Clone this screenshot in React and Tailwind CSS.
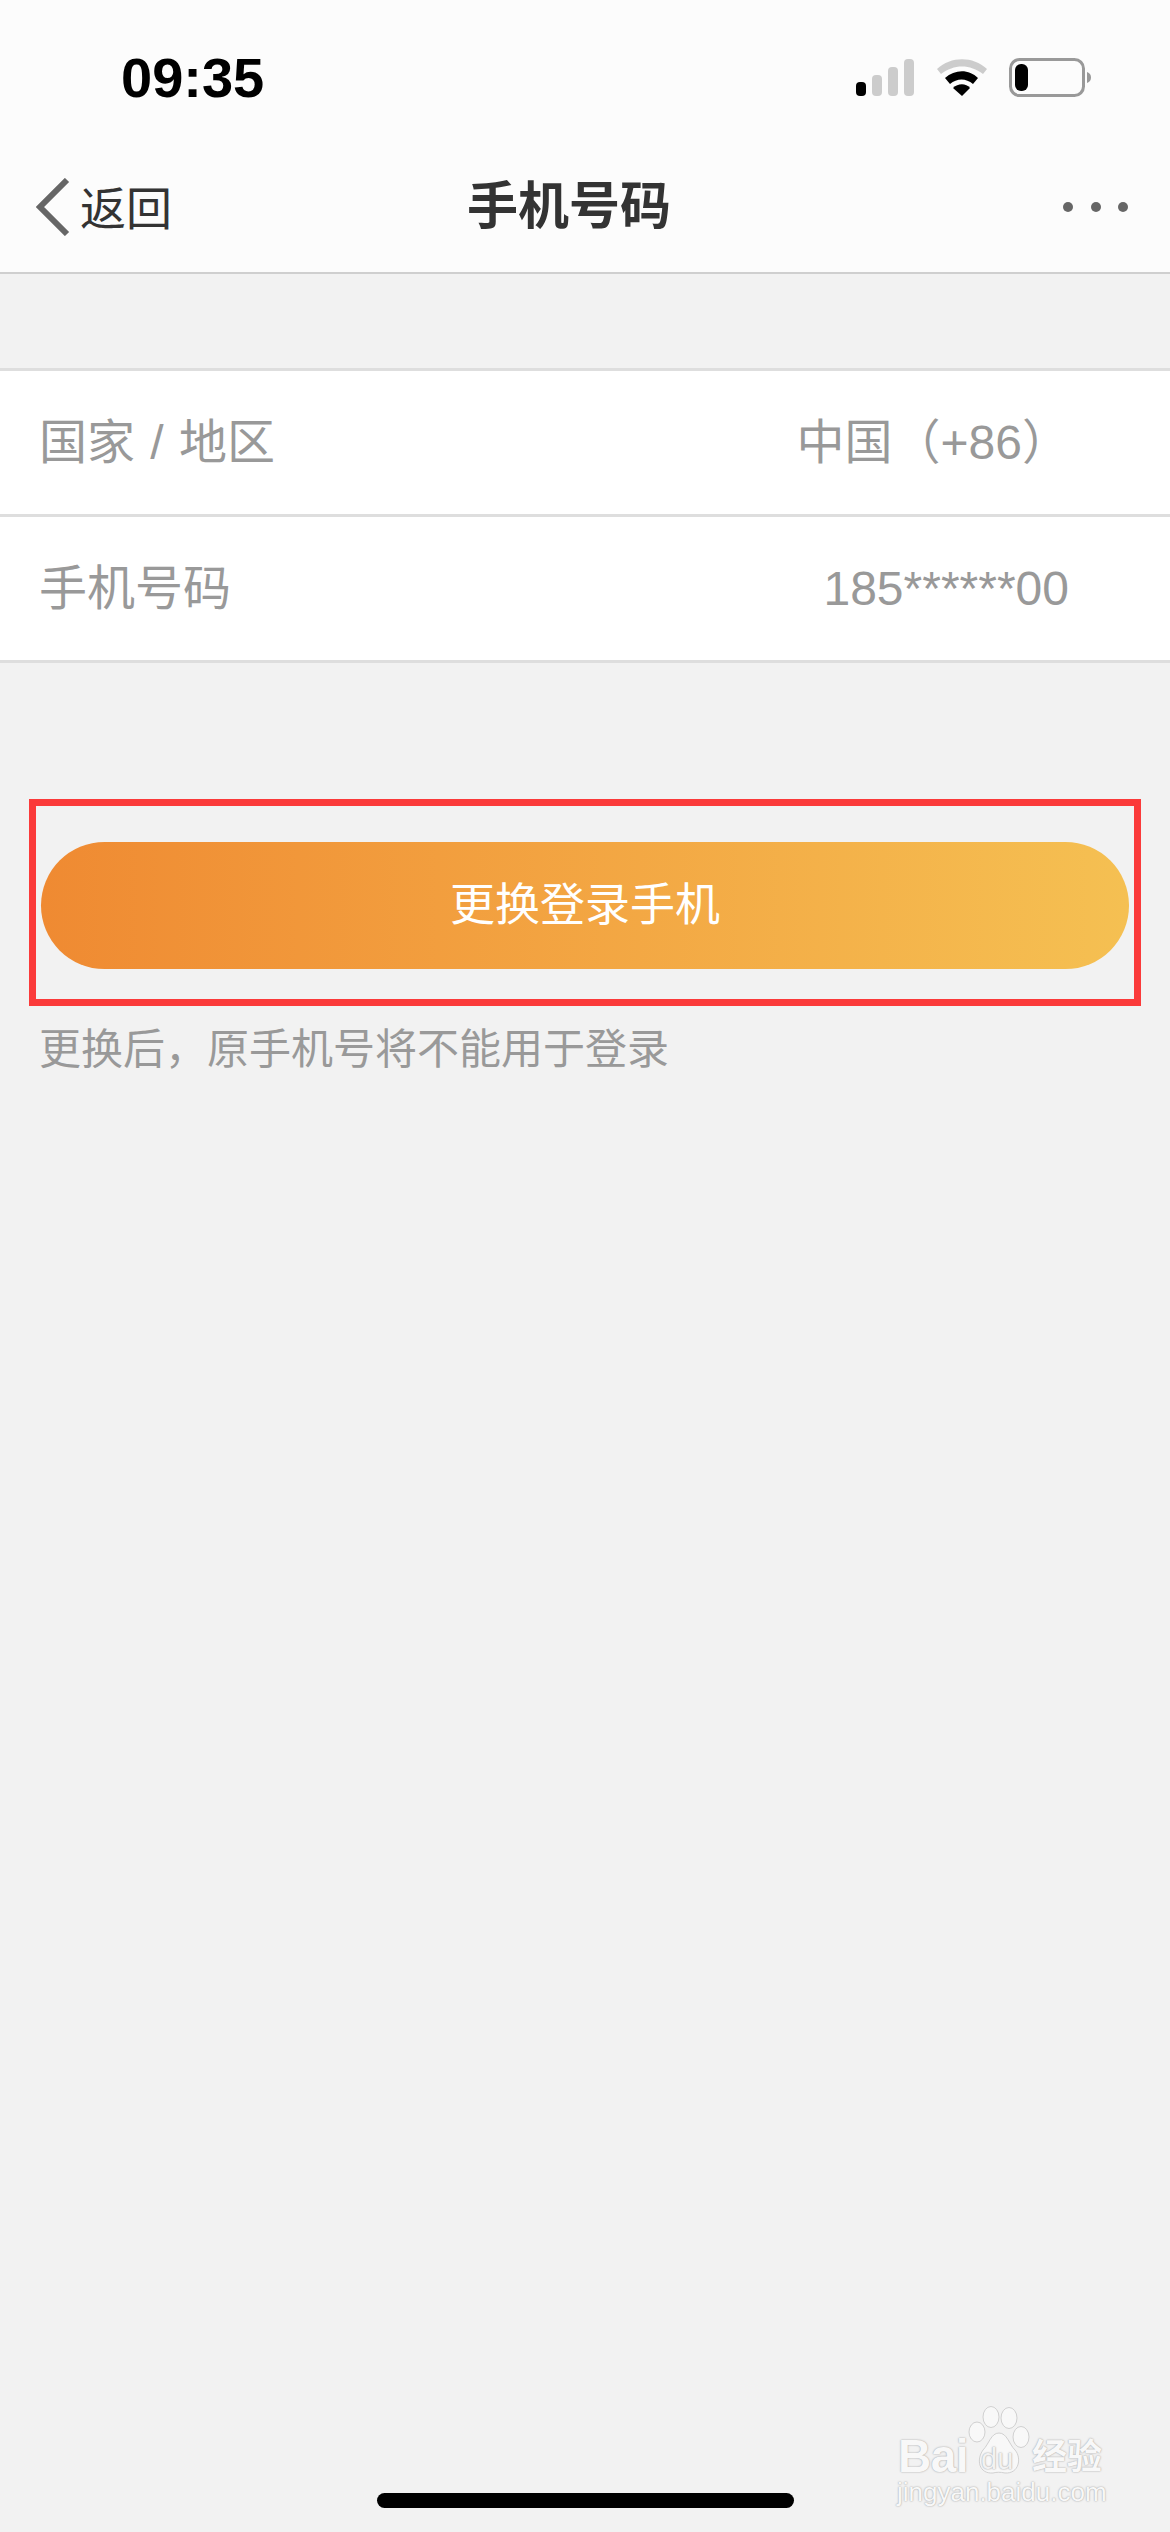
import React from 'react';

const CJK = "font-['Liberation_Sans','Noto_Sans_CJK_SC',sans-serif]";

const StatusIcons = () => (
    <div className="flex items-center">
        <svg width="58" height="37" viewBox="0 0 58 37">
            <rect x="0" y="23" width="10" height="14" rx="4" fill="#000" />
            <rect x="16" y="16" width="10" height="21" rx="4" fill="#ccc" />
            <rect x="32" y="8" width="10" height="29" rx="4" fill="#ccc" />
            <rect x="48" y="0" width="10" height="37" rx="4" fill="#ccc" />
        </svg>
        <svg className="ml-[23px]" width="50" height="37" viewBox="0 0 50 37">
            <path d="M0 10 C14 -3 36 -3 50 10 L46 15 C33 5 17 5 4 15 Z" fill="#ccc" />
            <path d="M8 19 C18 10 32 10 41 19 L36 25 C29 19 20 19 13 25 Z" fill="#000" />
            <path d="M16 29 C21 24 29 24 33 29 L25 37 Z" fill="#000" />
        </svg>
        <svg className="ml-[22px]" width="82" height="39" viewBox="0 0 82 39">
            <rect x="1.5" y="1.5" width="73" height="36" rx="9" fill="none" stroke="#999" strokeWidth="3" />
            <rect x="6" y="6" width="13" height="27" rx="6" fill="#000" />
            <path d="M78 14 C81 15 82 17 82 19.5 C82 22 81 24 78 25 Z" fill="#999" />
        </svg>
    </div>
);

const Row = ({ label, value, valueClass }) => (
    <div className="h-[146px] flex items-center justify-between pl-[39px] bg-white border-b-[3px] border-[#dedede] text-[48px] text-[#999]">
        <span className="[word-spacing:2px]">{label}</span>
        <span className={valueClass}>{value}</span>
    </div>
);

const Watermark = () => (
    <div className="absolute left-[896px] top-[2405px] w-[212px] h-[105px] text-[#f8f8f8] [text-shadow:0_0_2px_#aaaaaa,0_0_1px_#bbbbbb]">
        <span className="absolute left-[2px] top-[30px] text-[46px] leading-[42px] tracking-[-0.5px] font-bold font-['Liberation_Sans',sans-serif]">Bai</span>
        <svg className="absolute left-[71px] top-[1px]" width="66" height="70" viewBox="0 0 66 70">
            <g fill="#f8f8f8" stroke="#d0d0d0" strokeWidth="1">
                <ellipse cx="10" cy="26" rx="8" ry="10" />
                <ellipse cx="24" cy="11" rx="8" ry="10.5" />
                <ellipse cx="42" cy="12" rx="8" ry="10.5" />
                <ellipse cx="54" cy="31" rx="8" ry="10.5" />
                <path d="M32 27 C40 27 42 38 48 44 C55 52 52 68 38 67 C33 66 30 66 26 67 C12 68 9 54 16 44 C22 38 24 27 32 27 Z" />
            </g>
        </svg>
        <span className="absolute left-[85px] top-[38px] text-[29px] leading-[32px] text-[#f2f2f2] font-['Liberation_Sans',sans-serif]">du</span>
        <span className={`absolute left-[136px] top-[33px] text-[35px] leading-[37px] font-bold ${CJK}`}>经验</span>
        <span className="absolute left-[1px] top-[72px] text-[26px] leading-[30px] whitespace-nowrap font-['Liberation_Sans',sans-serif]">jingyan.baidu.com</span>
    </div>
);

export default function App() {
    return (
        <div className={`relative w-[1170px] h-[2532px] overflow-hidden flex flex-col bg-[#f2f2f2] ${CJK}`}>
            <header className="h-[274px] bg-[#fcfcfc] border-b-[2px] border-[#cfcfcf]">
                <div className="h-[155px] pt-[58px] pl-[121px] pr-[79px] flex items-start justify-between">
                    <span className="text-[56px] leading-[40px] font-bold text-black">09:35</span>
                    <StatusIcons />
                </div>
                <div className="h-[103px] flex items-start justify-between pr-[42px]">
                    <div className="flex items-start pl-[36px] pt-[23px]">
                        <svg width="34" height="58" viewBox="0 0 34 58">
                            <path d="M31 2 L4 29 L31 56" fill="none" stroke="#666" strokeWidth="6" />
                        </svg>
                        <span className="ml-[10px] mt-[3px] text-[46px] leading-[56px] text-[#333]">返回</span>
                    </div>
                    <h1 className="absolute left-0 right-0 top-[178px] text-center text-[51px] leading-[58px] font-bold text-[#333] pr-[32px]">手机号码</h1>
                    <div className="flex items-center gap-[17.5px] pt-[47px]">
                        <span className="w-[10px] h-[10px] rounded-full bg-[#666]" />
                        <span className="w-[10px] h-[10px] rounded-full bg-[#666]" />
                        <span className="w-[10px] h-[10px] rounded-full bg-[#666]" />
                    </div>
                </div>
            </header>

            <section className="mt-[94px] border-t-[3px] border-[#dedede]">
                <Row label="国家 / 地区" value="中国（+86）" valueClass="pr-[100px]" />
                <Row label="手机号码" value="185******00" valueClass="pr-[101px]" />
            </section>

            <div className="mx-[29px] mt-[136px] h-[207px] border-[7px] border-[#fb3a3a] px-[5px] pt-[36px]">
                <button className="w-full h-[127px] rounded-full bg-gradient-to-r from-[#ef8a32] to-[#f5c052] text-white text-[45px]">
                    更换登录手机
                </button>
            </div>
            <p className="mt-[19px] pl-[39px] text-[42px] leading-[50px] text-[#999]">更换后，原手机号将不能用于登录</p>

            <Watermark />
            <div className="absolute left-[377px] top-[2493px] w-[417px] h-[15px] rounded-full bg-black" />
        </div>
    );
}
